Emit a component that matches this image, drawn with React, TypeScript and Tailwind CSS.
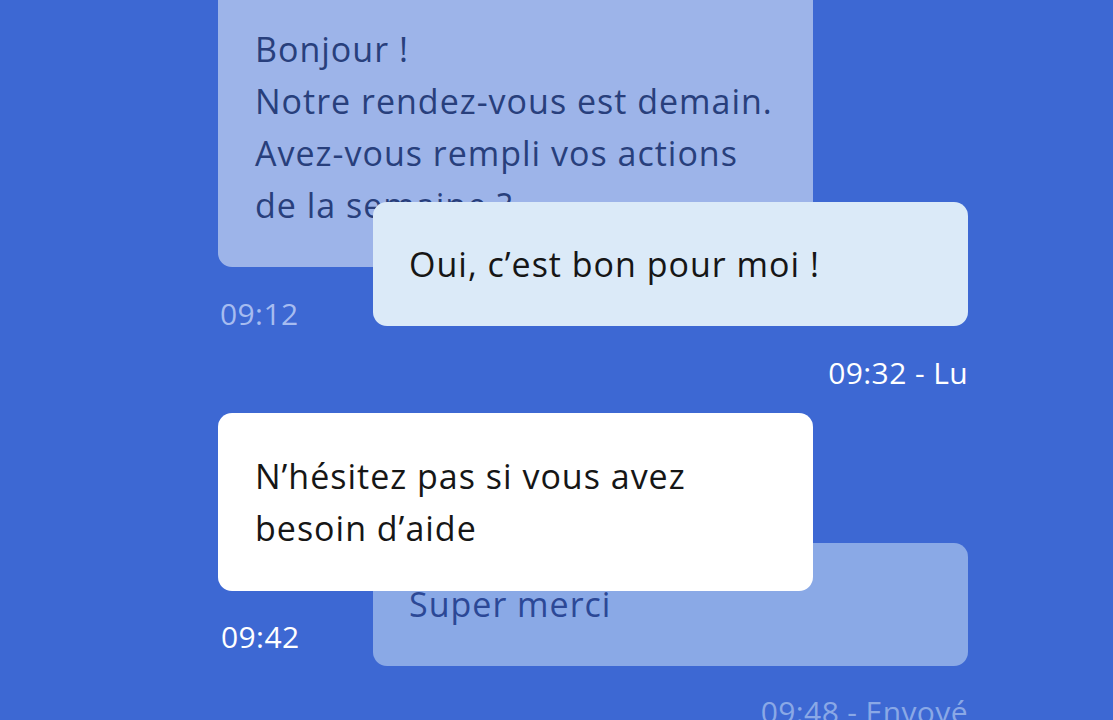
import React from "react";

export default function App() {
  const font = { fontFamily: '"Open Sans", "Noto Sans", sans-serif' };
  return (
    <div className="w-full h-[720px] bg-[#3d68d3] overflow-hidden" style={font}>
      <div className="flex flex-col w-[750px] ml-[218px] mt-[-13px]">
        {/* Message 1 */}
        <div className="flex flex-col items-start">
          <div className="w-[595px] rounded-[14px] bg-[#9db4e9] px-[37px] py-[36px] text-[34px] leading-[52px] tracking-[1px] text-[#283f7c] whitespace-nowrap">
            Bonjour !<br />
            Notre rendez-vous est demain.<br />
            Avez-vous rempli vos actions<br />
            de la semaine ?
          </div>
          <div className="mt-[29px] pl-[2px] text-[30px] leading-[36px] tracking-[0.4px] text-[#a6bcf0]">09:12</div>
        </div>

        {/* Message 2 */}
        <div className="relative z-10 mt-[-130px] flex flex-col items-end">
          <div className="w-[595px] rounded-[14px] bg-[#dbeaf8] px-[36px] py-[36px] text-[34px] leading-[52px] tracking-[1px] text-[#161616] whitespace-nowrap">
            Oui, c’est bon pour moi !
          </div>
          <div className="mt-[29px] text-[30px] leading-[36px] tracking-[0.4px] text-white">09:32 - Lu</div>
        </div>

        {/* Message 3 */}
        <div className="relative z-20 mt-[22px] flex flex-col items-start">
          <div className="w-[595px] rounded-[14px] bg-white px-[37px] py-[37px] text-[34px] leading-[52px] tracking-[1px] text-[#161616] whitespace-nowrap">
            N’hésitez pas si vous avez<br />
            besoin d’aide
          </div>
          <div className="mt-[28px] pl-[3px] text-[30px] leading-[36px] tracking-[0.4px] text-white">09:42</div>
        </div>

        {/* Message 4 */}
        <div className="relative z-10 mt-[-112px] flex flex-col items-end">
          <div className="w-[595px] rounded-[14px] bg-[#8aa9e6] px-[36px] py-[36px] text-[34px] leading-[51px] tracking-[1px] text-[#2c4896] whitespace-nowrap">
            Super merci
          </div>
          <div className="mt-[28px] text-[30px] leading-[36px] tracking-[0.4px] text-[#8aa8e6]">09:48 - Envoyé</div>
        </div>
      </div>
    </div>
  );
}
